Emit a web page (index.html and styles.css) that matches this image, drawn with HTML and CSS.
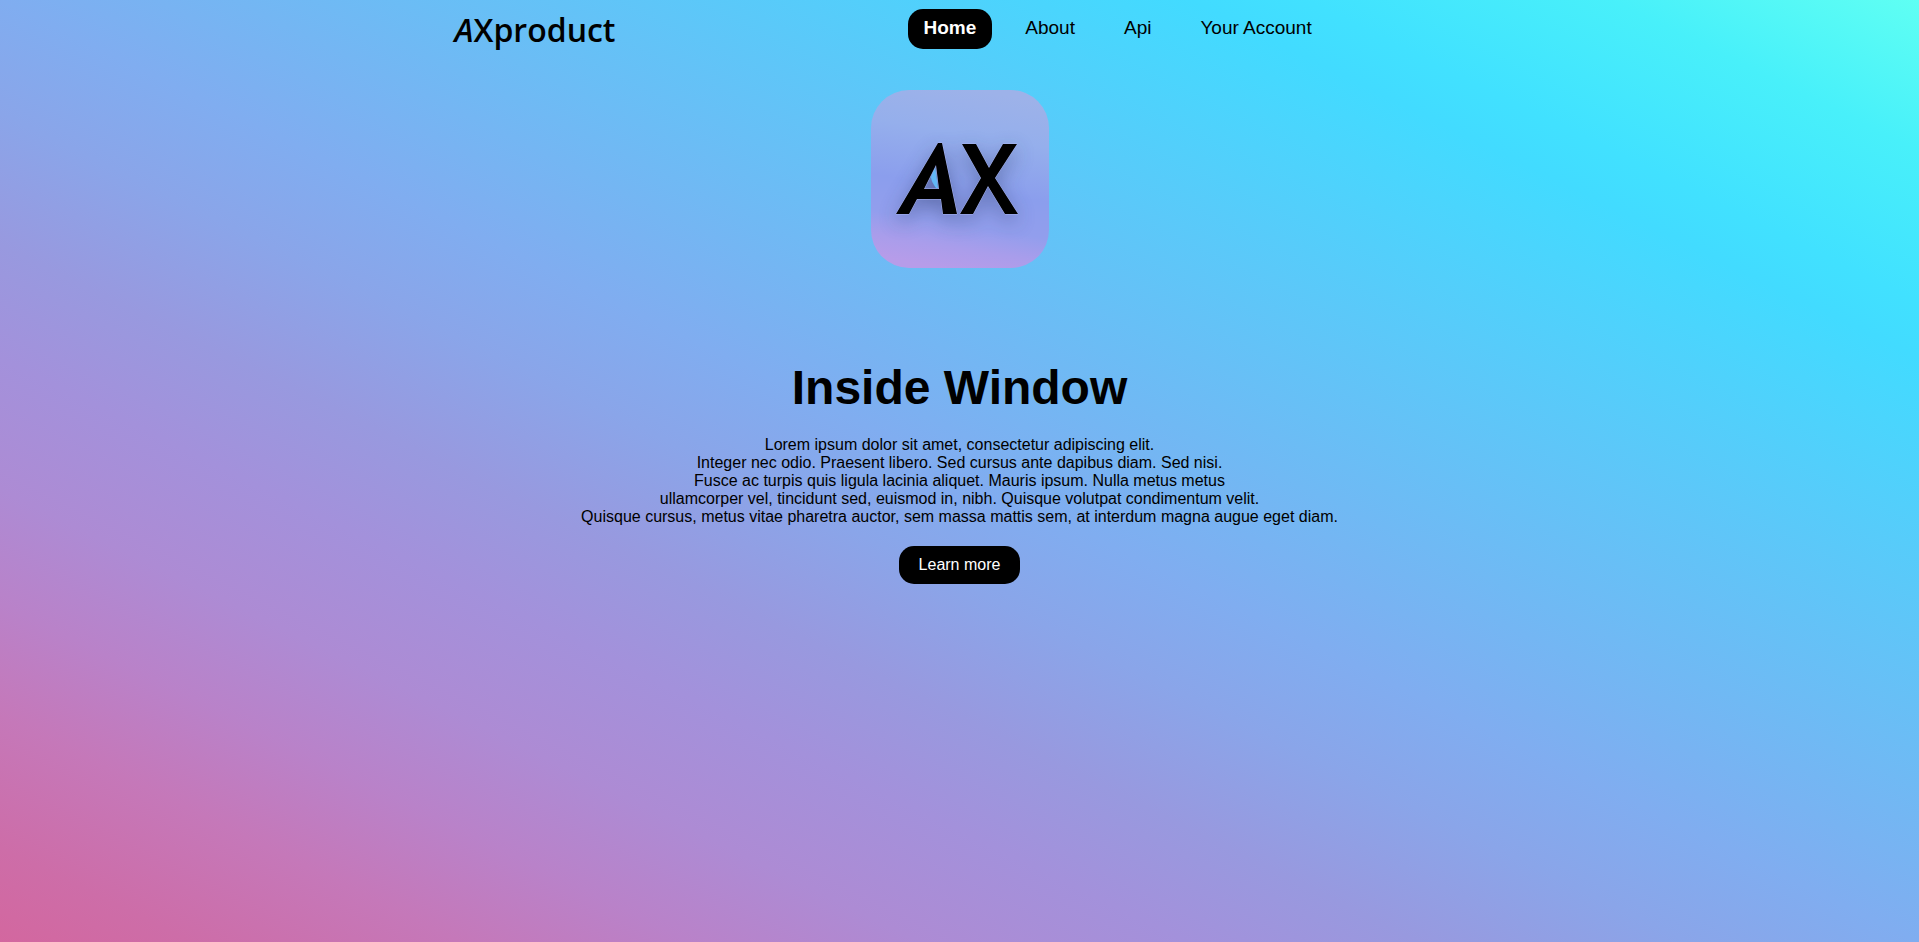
FILE: index.html
```html
<!DOCTYPE html>
<html lang="en">
<head>
<meta charset="utf-8">
<meta name="viewport" content="width=device-width, initial-scale=1">
<title>AXproduct</title>
<link rel="stylesheet" href="styles.css">
</head>
<body>
<header class="header">
  <a class="brand" href="#"><i class="brand-slant">A</i>Xproduct</a>
  <nav class="nav">
    <a class="nav-link nav-link-active" href="#">Home</a>
    <a class="nav-link" href="#">About</a>
    <a class="nav-link" href="#">Api</a>
    <a class="nav-link" href="#">Your Account</a>
  </nav>
</header>
<main class="hero">
  <svg class="logo" viewBox="0 0 178 178" role="img" aria-label="AX logo">
    <defs>
      <linearGradient id="tile" x1="0.58" y1="0" x2="0.42" y2="1">
        <stop offset="0" stop-color="#9db2e9"/>
        <stop offset="0.25" stop-color="#95afec"/>
        <stop offset="0.55" stop-color="#8b9eed"/>
        <stop offset="0.75" stop-color="#929eed"/>
        <stop offset="0.88" stop-color="#a99deb"/>
        <stop offset="1" stop-color="#b79ce9"/>
      </linearGradient>
      <filter id="shade" x="-40%" y="-40%" width="180%" height="180%">
        <feGaussianBlur stdDeviation="10"/>
      </filter>
    </defs>
    <rect width="178" height="178" rx="38" fill="url(#tile)"/>
    <g fill="#33406f" opacity="0.5" filter="url(#shade)">
      <path d="M25 130 68 60H72L87 130H73L70 116H45L37 130Z"/>
      <path d="M91 61H105L118 85 133 61H146L124 94 147 130H134L117 102 102 130H89L110 94Z"/>
    </g>
    <path d="M64 76 67 98H65Q60 91 60 87Z" fill="#62b8f5"/>
    <g stroke="#a9b6f4" stroke-width="1" paint-order="stroke">
      <path fill-rule="evenodd" d="M25 124 67 53H71L86 124H72L70 109H46L38 124ZM65 75 53 99H68Z"/>
      <path d="M91 54H105L118 78 132 54H146L124 88 147 124H134L117 96 102 124H89L110 88Z"/>
    </g>
  </svg>
  <h1 class="title">Inside Window</h1>
  <p class="text">Lorem ipsum dolor sit amet, consectetur adipiscing elit.<br>
  Integer nec odio. Praesent libero. Sed cursus ante dapibus diam. Sed nisi.<br>
  Fusce ac turpis quis ligula lacinia aliquet. Mauris ipsum. Nulla metus metus<br>
  ullamcorper vel, tincidunt sed, euismod in, nibh. Quisque volutpat condimentum velit.<br>
  Quisque cursus, metus vitae pharetra auctor, sem massa mattis sem, at interdum magna augue eget diam.</p>
  <button class="button" type="button">Learn more</button>
</main>
</body>
</html>
```
FILE: styles.css
```css
* {
  box-sizing: border-box;
}

body {
  margin: 0;
  min-height: 100vh;
  font-family: "Liberation Sans", Arial, sans-serif;
  font-size: 16px;
  line-height: 18px;
  color: #000;
  background: linear-gradient(to top right, #d3679f 0%, #cd6da8 5%, #c578b9 12%, #b982c9 18%, #ad8bd4 24%, #a391db 31%, #9899df 37%, #8aa5e9 44%, #80adf0 50%, #42dbff 81%, #41e1ff 84%, #48f0fa 92%, #5ffff3 100%) no-repeat;
}

.header {
  display: flex;
  align-items: flex-start;
  flex-wrap: wrap;
  column-gap: 292px;
  max-width: 1010px;
  margin: 0 auto;
  padding-top: 9px;
}

.brand {
  color: #000;
  font-family: "Trebuchet MS", "Open Sans", sans-serif;
  font-size: 32px;
  font-weight: 600;
  line-height: 41px;
  text-decoration: none;
}

.nav {
  display: flex;
  gap: 17px;
}

.nav-link {
  padding: 9px 16px 11px;
  border-radius: 15px;
  color: #000;
  font-size: 19px;
  line-height: 20px;
  text-decoration: none;
}

.nav-link-active {
  background: #000;
  color: #fff;
  font-weight: 700;
}

.hero {
  display: flex;
  flex-direction: column;
  align-items: center;
  padding: 40px 16px;
  text-align: center;
}

.logo {
  width: 178px;
  height: 178px;
}

.title {
  margin: 93px 0 21px;
  font-size: 48px;
  line-height: 54px;
}

.text {
  margin: 0 0 20px;
}

.button {
  padding: 10px 20px;
  border: 0;
  border-radius: 15px;
  background: #000;
  color: #fff;
  font: inherit;
}
```
